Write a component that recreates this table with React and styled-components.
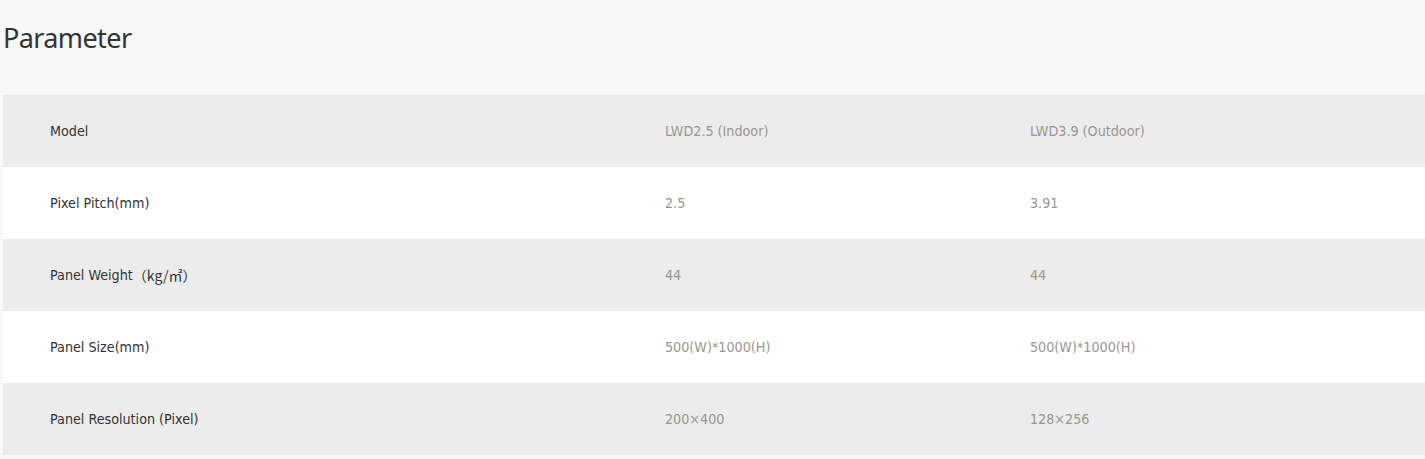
import React from "react";
import styled, { createGlobalStyle } from "styled-components";

const Global = createGlobalStyle`
  html, body { margin: 0; padding: 0; background: #f7f7f7; }
  body { overflow: hidden; }
`;

const Page = styled.div`
  padding: 0 0 0 3px;
  background: #f7f7f7;
  min-height: 459px;
`;

const Title = styled.h2`
  margin: 0;
  height: 95px;
  display: flex;
  align-items: center;
  padding-bottom: 21px;
  box-sizing: border-box;
  font-family: "Noto Sans", "Open Sans", sans-serif;
  font-weight: 400;
  font-size: 27px;
  color: #333;
  letter-spacing: -0.6px;
`;

const Table = styled.div`
  display: grid;
  grid-template-columns: 615px 365px 1fr;
`;

const Row = styled.div`
  display: contents;
`;

const Cell = styled.div`
  height: 72px;
  display: flex;
  align-items: center;
  padding-left: 47px;
  background: ${(p) => (p.$alt ? "#ececec" : "#ffffff")};
  font-family: "DejaVu Sans Condensed", "DejaVu Sans", sans-serif;
  font-size: 14.2px;
  color: ${(p) => (p.$head ? "#333333" : "#9a9590")};
  white-space: nowrap;
`;

const Unit = styled.span`
  font-family: "Noto Sans CJK SC", sans-serif;
  font-size: 14px;
`;

const rows = [
  ["Model", "LWD2.5 (Indoor)", "LWD3.9 (Outdoor)"],
  ["Pixel Pitch(mm)", "2.5", "3.91"],
  [
    <>
      Panel Weight <Unit>（kg/㎡）</Unit>
    </>,
    "44",
    "44",
  ],
  ["Panel Size(mm)", "500(W)*1000(H)", "500(W)*1000(H)"],
  ["Panel Resolution (Pixel)", "200×400", "128×256"],
];

export default function App() {
  return (
    <>
      <Global />
      <Page>
        <Title>Parameter</Title>
        <Table>
          {rows.map((r, i) => (
            <Row key={i}>
              {r.map((c, j) => (
                <Cell key={j} $alt={i % 2 === 0} $head={j === 0}>
                  {c}
                </Cell>
              ))}
            </Row>
          ))}
        </Table>
      </Page>
    </>
  );
}
